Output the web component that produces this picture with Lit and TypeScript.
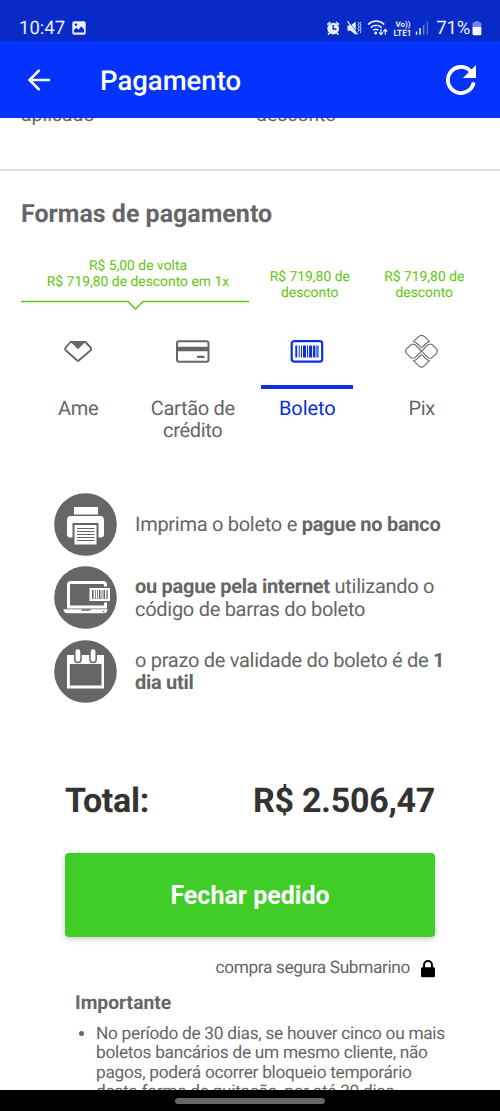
import { LitElement, html, css, svg } from "lit";
import { customElement } from "lit/decorators.js";

const bars = (items: number[][], y: number, h: number) =>
  items.map(([x, w]) => svg`<rect x=${x} y=${y} width=${w} height=${h} />`);

@customElement("status-bar")
class StatusBar extends LitElement {
  static styles = css`
    :host { display: flex; justify-content: space-between; height: 41px; box-sizing: border-box;
      padding: 17px 18px 0 19px; background: #082bc8; color: #e9eeff; font-size: 18.5px; line-height: 22px; }
    .left, .right { display: flex; align-items: flex-start; }
    .left svg { margin: 4px 0 0 7px; }
    .right svg { margin-top: 2px; }
    .pct { margin: 0 2px 0 4px; letter-spacing: -0.2px; }
  `;
  render() {
    return html`
      <div class="left"><span>10:47</span>
        <svg width="14" height="14" viewBox="0 0 14 14"><rect x=".3" y=".3" width="13.4" height="13.4" rx="1.8" fill="#e9eeff"/><path d="M2 11.5V9L4.5 6.8 6.5 8.8 9.3 5.3 12 8.6v2.9z" fill="#082bc8"/><circle cx="4" cy="3.8" r="1.2" fill="#082bc8"/></svg>
      </div>
      <div class="right">
        <svg width="106" height="20" viewBox="326 19 106 20" fill="#e9eeff">
          <circle cx="333.2" cy="28.6" r="5.9"/>
          <path d="M327.3 24.6l3-2.5M339 24.6l-3-2.5M329.6 33l-1.6 1.6M336.8 33l1.6 1.6" stroke="#e9eeff" stroke-width="1.6"/>
          <path d="M333.2 25v4h3.2" fill="none" stroke="#082bc8" stroke-width="1.4"/>
          <path d="M347.5 25.5h3.2l5-4v13.5l-5-4.3h-3.2z"/>
          <path d="M347 20.3L357.500 33.500" stroke="#082bc8" stroke-width="1.2"/>
          <path d="M347.500 21.3L357.5 34.3" stroke="#e9eeff" stroke-width="1.2"/>
          <path d="M358 22l1.2 1.6-1.2 1.6 1.2 1.6-1.2 1.6 1.2 1.6-1.2 1.6M361 22l-1 1.6 1 1.6-1 1.6 1 1.6-1 1.6 1 1.6-1 1.6" fill="none" stroke="#e9eeff" stroke-width=".9"/>
          <g fill="none" stroke="#e9eeff" stroke-width="1.6"><path d="M368.2 24.6a11 11 0 0 1 16 0M370.8 27.6a7.5 7.5 0 0 1 10.8 0M373.2 30.4a4.4 4.4 0 0 1 5.2-.3"/></g>
          <circle cx="375.7" cy="33" r="1.5"/>
          <path d="M381 29v5M379 32.4l2 2.2 2-2.2M385.3 34.8v-5M383.4 31.5l1.9-2.2 1.9 2.2" fill="none" stroke="#e9eeff" stroke-width="1.2"/>
          <text x="395.500" y="27.2" font-size="7.8" font-weight="700" textLength="15" lengthAdjust="spacingAndGlyphs">Vo))</text>
          <text x="393.5" y="35.6" font-size="8.8" font-weight="700" textLength="18" lengthAdjust="spacingAndGlyphs">LTE1</text>
          <rect x="415.8" y="31.5" width="1.5" height="3.2"/><rect x="419.3" y="28" width="1.5" height="6.7"/>
          <rect x="423" y="25" width="1.4" height="9.7" opacity=".45"/><rect x="426.7" y="21.5" width="1.4" height="13.2" opacity=".35"/>
        </svg>
        <span class="pct">71%</span>
        <svg width="10" height="18" viewBox="0 0 10 18"><path d="M2.5 3.5a1.2 1.2 0 0 1 1.2-1.2h2.6a1.2 1.2 0 0 1 1.2 1.2h.7A1.2 1.2 0 0 1 9.4 4.700V8H.5V4.700A1.200 1.200 0 0 1 1.700 3.500z" fill="#7189e6"/><path d="M.5 8h8.900v6.800a1.500 1.500 0 0 1-1.500 1.500H2a1.500 1.500 0 0 1-1.500-1.500z" fill="#f3f5ff"/></svg>
      </div>`;
  }
}

@customElement("app-header")
class AppHeader extends LitElement {
  static styles = css`
    :host { display: flex; align-items: center; height: 77px; background: #0433ff; color: #fff;
      padding: 0 23px 0 27px; box-sizing: border-box; }
    .title { flex: 1; margin: 3px 0 0 49px; font-size: 27.5px; font-weight: 500; line-height: 34px; }
    .reload { margin-top: 1px; }
  `;
  render() {
    return html`
      <svg width="24" height="24" viewBox="0 0 24 24" fill="none" stroke="#fff" stroke-width="2.5"><path d="M12.500 2L2.500 12l10 10M2.500 12H23"/></svg>
      <div class="title">Pagamento</div>
      <svg class="reload" width="32" height="32" viewBox="0 0 32 32"><path d="M28.700 18.300A13 13 0 1 1 25.600 7.300" fill="none" stroke="#fff" stroke-width="3.800"/><path d="M31 1v13H18z" fill="#fff"/></svg>`;
  }
}

const ameIcon = html`<svg width="36" height="36" viewBox="0 0 36 36"><path d="M10.500 9h15l5.500 6v2L19 27.300q-1 1-2 0L5.300 17v-2z" fill="none" stroke="#666" stroke-width="1.900" stroke-linejoin="round"/><path d="M10.500 8.700h15L18 16.200z" fill="#666"/></svg>`;
const cardIcon = html`<svg width="36" height="36" viewBox="0.5 0 36 36"><rect x="2.500" y="8.200" width="31.500" height="20.500" rx="2" fill="none" stroke="#666" stroke-width="2"/><path d="M2 13.800h32.500v4.500H2zM22.500 22.700H30v2.300h-7.500z" fill="#666"/></svg>`;
const boletoIcon = html`<svg width="36" height="36" viewBox="0.3 0 36 36"><rect x="3" y="8.200" width="30.500" height="20.500" rx="2.500" fill="none" stroke="#0b30e0" stroke-width="2.200"/><g fill="#0b30e0">${bars([[6.600, 1.900], [10, 1], [12.300, 1], [14.300, 3], [18.300, 1.100], [20.400, 3], [24.300, 2], [26.900, 1], [28.600, 1.200]], 12.500, 12)}</g></svg>`;
const pixIcon = html`<svg width="36" height="36" viewBox="0.5 0 36 36"><g transform="translate(18 18.200)" fill="none" stroke="#666" stroke-width="1.100" stroke-linejoin="round">
  <path d="M-8 -9.500L-3 -14.500Q0 -17.300 3 -14.500L8 -9.500Q6 -9.200 4.500 -7.700L1.200 -4.300Q0 -3.200 -1.200 -4.300L-4.500 -7.700Q-6 -9.200 -8 -9.500Z"/>
  <path d="M-8 9.500L-3 14.500Q0 17.300 3 14.500L8 9.500Q6 9.200 4.500 7.700L1.200 4.300Q0 3.200 -1.200 4.300L-4.500 7.700Q-6 9.200 -8 9.500Z"/>
  <path d="M-10 -7H-8.500Q-7 -7 -6 -6L-.7 -.700Q0 0 -.700 .700L-6 6Q-7 7 -8.500 7H-10L-14.800 2.500Q-17 0 -14.800 -2.500Z"/>
  <path d="M10 -7H8.500Q7 -7 6 -6L.7 -.700Q0 0 .700 .700L6 6Q7 7 8.500 7H10L14.800 2.500Q17 0 14.800 -2.500Z"/></g></svg>`;

@customElement("payment-methods")
class PaymentMethods extends LitElement {
  static styles = css`
    :host { display: block; padding: 0 21px; }
    .heading { margin: 29px 0 0; font-size: 25px; line-height: 30px; font-weight: 700; color: #666; }
    .promos { display: grid; grid-template-columns: 229px 1fr 1fr; margin-top: 28px; height: 52px;
      font-size: 13.900px; line-height: 16px; color: #5fc60e; text-align: center; }
    .promo { padding: 11px 0 0 5px; }
    .wide { padding: 0; display: flex; flex-direction: column; justify-content: space-between; }
    .wide span { padding-left: 5px; }
    .tabs { display: grid; grid-template-columns: repeat(4, 1fr); margin-top: 23px; }
    .tab { display: flex; flex-direction: column; align-items: center; text-align: center;
      font-size: 20px; line-height: 22.500px; letter-spacing: -0.3px; color: #666; }
    .bar { width: 92px; height: 4px; margin: 16px 0 7.500px; }
    .active { color: #0b30e0; letter-spacing: -0.1px; }
    .active .bar { background: #0b30e0; }
  `;
  render() {
    const tabs = [
      { icon: ameIcon, label: html`Ame` },
      { icon: cardIcon, label: html`Cartão de<br />crédito` },
      { icon: boletoIcon, label: html`Boleto`, active: true },
      { icon: pixIcon, label: html`Pix` },
    ];
    return html`
      <h2 class="heading">Formas de pagamento</h2>
      <div class="promos">
        <div class="promo wide"><span>R$ 5,00 de volta<br />R$ 719,80 de desconto em 1x</span>
          <svg width="228" height="14" viewBox="0 0 228 14" fill="none" stroke="#5fc60e" stroke-width="1.300"><path d="M0 5.500h107l7.500 7.500 7.500-7.500H228"/></svg>
        </div>
        <div class="promo">R$ 719,80 de<br />desconto</div>
        <div class="promo">R$ 719,80 de<br />desconto</div>
      </div>
      <div class="tabs">${tabs.map((t) => html`<div class="tab ${t.active ? "active" : ""}">${t.icon}<div class="bar"></div><span>${t.label}</span></div>`)}</div>`;
  }
}

const printerIcon = svg`
  <path d="M20 14h24v7.500H20z" fill="#fff"/>
  <path d="M13 27a4 4 0 0 1 4-4h29a4 4 0 0 1 4 4v14a3.500 3.500 0 0 1-3.500 3.500h-30A3.500 3.500 0 0 1 13 41z" fill="#fff"/>
  <path d="M18.500 30h26v16h-26z" fill="#666"/><path d="M20.500 32h22v19.500h-22z" fill="#fff"/>
  <path d="M23 35.500h17.500M23 38.500h17.500M23 41.500h17.500M23 44.500h17.500M23 47.500h17.500" stroke="#666" stroke-width="1"/>`;
const laptopIcon = svg`
  <path d="M14.500 41V19a2.500 2.500 0 0 1 2.500-2.500h32a2.500 2.500 0 0 1 2.500 2.500V41z" fill="none" stroke="#fff" stroke-width="3"/>
  <path d="M9.500 43.300h44q0 4-4.500 4H14q-4.500 0-4.500-4z" fill="#fff"/><path d="M27 43.300h10l-1 1.400h-8z" fill="#666"/><circle cx="49.500" cy="45.500" r=".8" fill="#666"/>
  <path d="M34 20.500h23v16H34z" fill="#666"/><path d="M35.500 22h20.500v13H35.500z" fill="#fff"/>
  <g fill="#666">${bars([[38, 1.600], [41, .8], [43, .8], [45, 1.500], [47.600, .8], [49.500, 1.500], [52.400, 1.300]], 24, 9)}</g>`;
const calendarIcon = svg`
  <path d="M13 15h37v33.500H13z" fill="#fff"/><path d="M15.800 24h31.700v21.500H15.800z" fill="#666"/>
  <g fill="#fff" stroke="#666" stroke-width="1.500"><rect x="20.800" y="8.500" width="6.200" height="14" rx="3.100"/><rect x="36" y="8.500" width="6.200" height="14" rx="3.100"/></g>`;

@customElement("boleto-steps")
class BoletoSteps extends LitElement {
  static styles = css`
    :host { display: flex; flex-direction: column; gap: 10.700px; padding: 0 40px 0 54px; margin-top: 51px; }
    .step { display: flex; align-items: center; gap: 18px; height: 63px; font-size: 20px; line-height: 22.500px; letter-spacing: -0.280px; color: #666; }
    .pic { flex: none; }
    .copy { white-space: nowrap; }
  `;
  render() {
    const steps = [
      [printerIcon, html`Imprima o boleto e <b>pague no banco</b>`],
      [laptopIcon, html`<b>ou pague pela internet</b> utilizando o<br />código de barras do boleto`],
      [calendarIcon, html`o prazo de validade do boleto é de <b>1<br />dia util</b>`],
    ];
    return html`${steps.map(([icon, text]) => html`<div class="step">
      <svg class="pic" width="63" height="63" viewBox="0 0 63 63"><circle cx="31.500" cy="31.500" r="31.300" fill="#666"/>${icon}</svg>
      <div class="copy">${text}</div></div>`)}`;
  }
}

@customElement("order-summary")
class OrderSummary extends LitElement {
  static styles = css`
    :host { display: block; padding: 0 65px; margin-top: 78px; }
    .total { display: flex; justify-content: space-between; font-size: 34px; line-height: 40px; font-weight: 700; letter-spacing: -0.270px; color: #333; }
    .buy { display: block; width: 100%; height: 84px; margin-top: 32.500px; padding: 2px 0 0; border: 0; border-radius: 4px; background: #41cd28;
      color: #fff; font: 700 25px/30px Roboto, sans-serif; box-shadow: 0 2px 6px rgba(0, 0, 0, .22); }
    .secure { display: flex; justify-content: flex-end; align-items: center; gap: 11px; margin-top: 21px;
      font-size: 17.300px; line-height: 20px; letter-spacing: -0.370px; color: #666; }
    .secure svg { margin-top: 1px; }
    .notice { padding: 0 0 0 10px; margin-right: -20px; color: #666; }
    .notice h3 { margin: 13px 0 0; font-size: 19.300px; line-height: 23px; font-weight: 700; }
    .notice ul { margin: 10.500px 0 0; padding: 0 0 0 21px; font-size: 17.300px; line-height: 19.500px; letter-spacing: -0.290px; white-space: nowrap; }
  `;
  render() {
    return html`
      <div class="total"><span>Total:</span><span>R$ 2.506,47</span></div>
      <button class="buy">Fechar pedido</button>
      <div class="secure"><span>compra segura Submarino</span>
        <svg width="14" height="18" viewBox="0 0 14 18"><path d="M3 8V5a4 4 0 0 1 8 0v3" fill="none" stroke="#000" stroke-width="2"/><rect y="7.300" width="14" height="10" rx="1.300"/></svg>
      </div>
      <div class="notice"><h3>Importante</h3>
        <ul><li>No período de 30 dias, se houver cinco ou mais<br />boletos bancários de um mesmo cliente, não<br />pagos, poderá ocorrer bloqueio temporário<br />desta forma de quitação, por até 30 dias.</li></ul>
      </div>`;
  }
}

@customElement("app-root")
class AppRoot extends LitElement {
  static styles = css`
    :host { display: flex; flex-direction: column; width: 500px; height: 1111px; overflow: hidden; background: #fff;
      font-family: Roboto, sans-serif; text-rendering: geometricPrecision; }
    .content { flex: 1; min-height: 0; overflow: hidden; }
    .clipped { display: grid; grid-template-columns: 235px 1fr; padding-left: 21px; height: 51px; border-bottom: 2px solid #e2e2e2;
      font-size: 19.400px; line-height: 22px; color: #666; }
    .clipped span { margin-top: -14px; }
    .nav { height: 21px; background: #000; display: flex; justify-content: center; align-items: center; }
    .pill { width: 150px; height: 6px; border-radius: 3px; background: #666; }
  `;
  render() {
    return html`
      <status-bar></status-bar>
      <app-header></app-header>
      <div class="content">
        <div class="clipped"><span>aplicado</span><span>desconto</span></div>
        <payment-methods></payment-methods>
        <boleto-steps></boleto-steps>
        <order-summary></order-summary>
      </div>
      <div class="nav"><div class="pill"></div></div>`;
  }
}
